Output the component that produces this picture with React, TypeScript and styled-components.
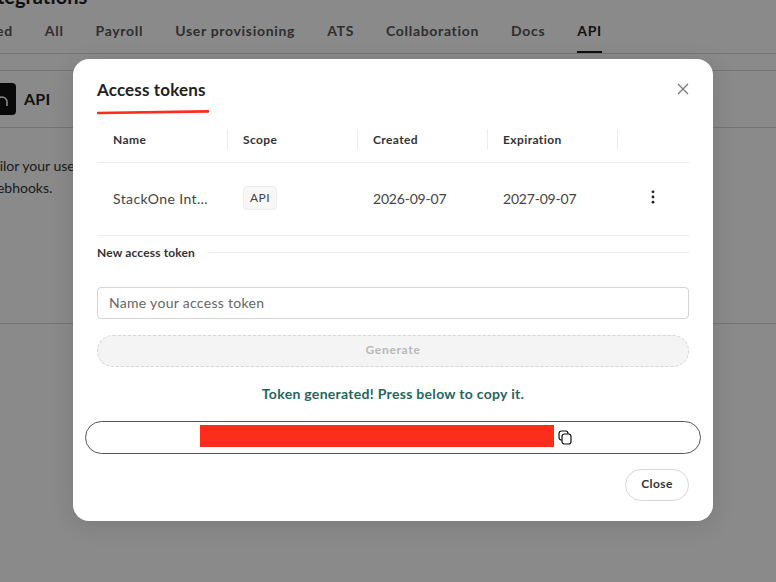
import React from 'react'
import styled, { createGlobalStyle } from 'styled-components'

const GlobalStyle = createGlobalStyle`
  html, body {
    margin: 0;
    padding: 0;
    height: 100%;
    overflow: hidden;
    background: #fff;
    font-family: Lato, 'Liberation Sans', sans-serif;
  }
`

const Page = styled.div`
  position: relative;
  width: 776px;
  height: 582px;
  overflow: hidden;
  color: #1d1d1d;
`

const PageTitle = styled.h1`
  margin: -17px 0 0 -20px;
  height: 26px;
  font-size: 20px;
  line-height: 26px;
  font-weight: 700;
`

const TabBar = styled.nav`
  display: flex;
  align-items: flex-start;
  gap: 32px;
  height: 32px;
  margin-top: 12px;
  margin-left: -4px;
  border-bottom: 1px solid #d8d8d8;
`

const Tab = styled.span<{ $active?: boolean }>`
  position: relative;
  height: 32px;
  font-size: 14px;
  line-height: 20px;
  font-weight: 700;
  letter-spacing: 0.69px;
  color: ${p => (p.$active ? '#1d1d1d' : '#555')};
  &::after {
    content: '';
    display: ${p => (p.$active ? 'block' : 'none')};
    position: absolute;
    left: 0;
    right: 0;
    bottom: 0;
    height: 2px;
    background: #1d1d1d;
  }
`

const IntegrationCard = styled.section`
  margin-top: 16px;
  height: 252px;
  border-top: 1px solid #d8d8d8;
  border-bottom: 1px solid #d8d8d8;
`

const CardHead = styled.div`
  display: flex;
  align-items: center;
  gap: 8px;
  height: 56px;
  margin-left: -16px;
  border-bottom: 1px solid #d8d8d8;
`

const LogoTile = styled.div`
  display: flex;
  align-items: center;
  justify-content: center;
  width: 32px;
  height: 32px;
  border-radius: 4px;
  background: #111;
`

const CardName = styled.span`
  margin-top: -2px;
  font-size: 16px;
  font-weight: 700;
  letter-spacing: 0.2px;
`

const CardText = styled.p`
  margin: 27px 0 0 -14px;
  width: 400px;
  font-size: 14px;
  line-height: 22px;
  color: #333;
`

const Backdrop = styled.div`
  position: absolute;
  inset: 0;
  background: rgba(0, 0, 0, 0.46);
`

const Modal = styled.div`
  position: absolute;
  left: 73px;
  top: 59px;
  box-sizing: border-box;
  width: 640px;
  height: 462px;
  padding: 20px 24px 20px;
  border-radius: 16px;
  background: #fff;
  box-shadow: 0 4px 24px rgba(0, 0, 0, 0.12);
`

const ModalHead = styled.div`
  position: relative;
  display: flex;
  align-items: flex-start;
  justify-content: space-between;
  height: 39px;
`

const ModalTitle = styled.h2`
  margin: 0;
  font-size: 17px;
  line-height: 22px;
  font-weight: 700;
  letter-spacing: 0.15px;
  color: #222;
`

const Scribble = styled.svg`
  position: absolute;
  left: 0;
  top: 30px;
`

const CloseButton = styled.button`
  display: flex;
  padding: 0;
  margin: 0 -4px 0 0;
  border: 0;
  background: none;
  color: #777;
`

const Row = styled.div<{ $head?: boolean }>`
  display: grid;
  grid-template-columns: 130px 130px 130px 130px 72px;
  align-items: center;
  height: ${p => (p.$head ? '44px' : '72px')};
  border-bottom: 1px solid #ececec;
`

const HeadCell = styled.div`
  display: flex;
  align-items: center;
  height: 20px;
  margin-top: -2px;
  padding-left: 16px;
  font-size: 12px;
  font-weight: 700;
  letter-spacing: 0.4px;
  color: #333;
  &:not(:first-child) {
    padding-left: 15px;
    border-left: 1px solid #ececec;
  }
`

const Cell = styled.div`
  margin-top: -2px;
  padding-left: 16px;
  font-size: 14px;
  letter-spacing: 0.4px;
  color: #444;
  white-space: nowrap;
`

const DateCell = styled(Cell)`
  letter-spacing: -0.2px;
`

const ScopeTag = styled.span`
  display: inline-block;
  padding: 0 6px;
  height: 22px;
  line-height: 21px;
  font-size: 12px;
  border: 1px solid #ececec;
  border-radius: 4px;
  background: #f7f7f7;
  color: #444;
`

const MenuCell = styled.div`
  display: flex;
  justify-content: center;
  margin-top: -4px;
  color: #222;
`

const SectionLabel = styled.div`
  display: flex;
  align-items: center;
  gap: 12px;
  height: 34px;
  margin-top: -1px;
  font-size: 12px;
  font-weight: 700;
  letter-spacing: 0.15px;
  color: #333;
  &::after {
    content: '';
    flex: 1;
    height: 1px;
    margin-top: 1px;
    background: #ececec;
  }
`

const NameInput = styled.input`
  box-sizing: border-box;
  display: block;
  width: 592px;
  height: 32px;
  margin-top: 18px;
  padding: 0 11px 2px;
  border: 1px solid #d4d4d4;
  border-radius: 4px;
  font-family: inherit;
  font-size: 14px;
  letter-spacing: 0.3px;
  outline: none;
  &::placeholder {
    color: #666;
    opacity: 1;
  }
`

const GenerateButton = styled.button`
  display: block;
  box-sizing: border-box;
  width: 592px;
  height: 32px;
  margin-top: 16px;
  padding: 0 0 3px;
  border: 1px dashed #d6d6d6;
  border-radius: 16px;
  background: #f4f4f4;
  font-family: inherit;
  font-size: 12px;
  font-weight: 700;
  letter-spacing: 0.7px;
  color: #b8b8b8;
`

const Notice = styled.p`
  margin: 18px 0 0;
  height: 18px;
  text-align: center;
  font-size: 14px;
  line-height: 18px;
  font-weight: 700;
  letter-spacing: 0.3px;
  color: #1f6660;
`

const TokenBox = styled.div`
  box-sizing: border-box;
  display: flex;
  align-items: center;
  justify-content: center;
  gap: 4px;
  width: 616px;
  height: 33px;
  margin: 18px 0 0 -12px;
  border: 1px solid #555;
  border-radius: 17px;
  padding-right: 14px;
`

const Redaction = styled.span`
  width: 354px;
  height: 22px;
  margin-top: -3px;
  background: #fc2d1c;
`

const CopyIcon = styled.svg`
  margin-top: 0;
`

const Footer = styled.div`
  display: flex;
  justify-content: flex-end;
  margin-top: 15px;
`

const CloseAction = styled.button`
  width: 64px;
  height: 32px;
  padding: 0 0 4px;
  border: 1px solid #d8d8d8;
  border-radius: 16px;
  background: #fff;
  font-family: inherit;
  font-size: 12px;
  font-weight: 700;
  letter-spacing: 0.4px;
  color: #333;
`

const tabs = ['ed', 'All', 'Payroll', 'User provisioning', 'ATS', 'Collaboration', 'Docs', 'API']

export default function App() {
  return (
    <Page>
      <GlobalStyle />
      <PageTitle>Integrations</PageTitle>
      <TabBar>
        {tabs.map(tab => (
          <Tab key={tab} $active={tab === 'API'}>
            {tab}
          </Tab>
        ))}
      </TabBar>
      <IntegrationCard>
        <CardHead>
          <LogoTile>
            <svg width="20" height="20" viewBox="0 0 20 20" fill="none">
              <path d="M7 17V13a5 5 0 0 1 10 0v4" stroke="#fff" strokeWidth="1.6" />
            </svg>
          </LogoTile>
          <CardName>API</CardName>
        </CardHead>
        <CardText>
          Tailor your user experience with our API and
          <br />
          webhooks.
        </CardText>
      </IntegrationCard>
      <Backdrop />
      <Modal>
        <ModalHead>
          <ModalTitle>Access tokens</ModalTitle>
          <Scribble width="114" height="6" viewBox="0 0 114 6" fill="none">
            <path d="M1 4 L111 2.4" stroke="#fc2d1c" strokeWidth="2.6" strokeLinecap="round" />
          </Scribble>
          <CloseButton aria-label="Close">
            <svg width="20" height="20" viewBox="0 0 20 20" fill="none">
              <path d="M5 5l10 10M15 5L5 15" stroke="currentColor" strokeWidth="1.2" />
            </svg>
          </CloseButton>
        </ModalHead>
        <Row $head>
          <HeadCell>Name</HeadCell>
          <HeadCell>Scope</HeadCell>
          <HeadCell>Created</HeadCell>
          <HeadCell>Expiration</HeadCell>
          <HeadCell />
        </Row>
        <Row>
          <Cell>StackOne Int…</Cell>
          <Cell>
            <ScopeTag>API</ScopeTag>
          </Cell>
          <DateCell>2026-09-07</DateCell>
          <DateCell>2027-09-07</DateCell>
          <MenuCell>
            <svg width="16" height="16" viewBox="0 0 16 16" fill="currentColor">
              <circle cx="8" cy="2.8" r="1.4" />
              <circle cx="8" cy="8" r="1.4" />
              <circle cx="8" cy="13.2" r="1.4" />
            </svg>
          </MenuCell>
        </Row>
        <SectionLabel>New access token</SectionLabel>
        <NameInput placeholder="Name your access token" />
        <GenerateButton disabled>Generate</GenerateButton>
        <Notice>Token generated! Press below to copy it.</Notice>
        <TokenBox>
          <Redaction />
          <CopyIcon width="14" height="15" viewBox="0 0 14 15" fill="none" stroke="#111" strokeWidth="1.2">
            <rect x="1" y="1" width="9" height="9" rx="2.5" />
            <rect x="4" y="4" width="9" height="10" rx="2.5" fill="#fff" />
          </CopyIcon>
        </TokenBox>
        <Footer>
          <CloseAction>Close</CloseAction>
        </Footer>
      </Modal>
    </Page>
  )
}
